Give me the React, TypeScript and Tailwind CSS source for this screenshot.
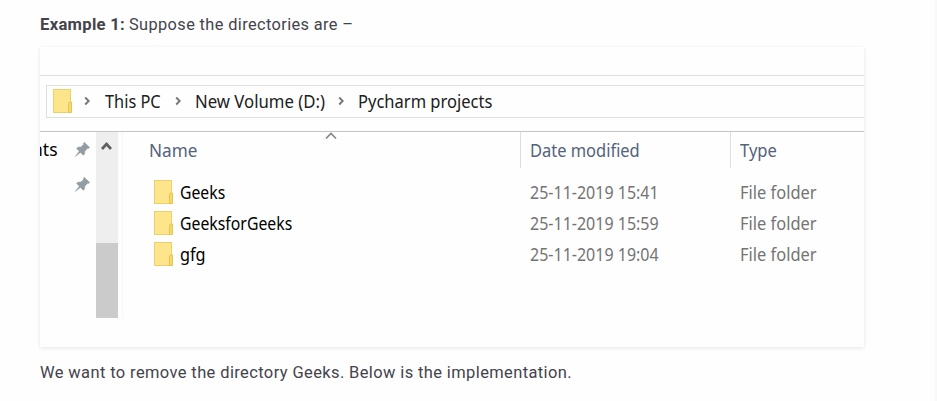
import { useLayoutEffect, useRef, useState } from "react";

type FitProps = { children: string; width: number; className?: string };

// Condenses or widens a single line of text to the given width.
function Fit({ children, width, className = "" }: FitProps) {
  const ref = useRef<HTMLSpanElement>(null);
  const [scale, setScale] = useState(1);
  useLayoutEffect(() => {
    if (ref.current) setScale(width / ref.current.offsetWidth);
  }, [width]);
  return (
    <span className={`block shrink-0 ${className}`} style={{ width }}>
      <span ref={ref} className="inline-block origin-left whitespace-nowrap" style={{ transform: `scaleX(${scale})` }}>
        {children}
      </span>
    </span>
  );
}

function Folder() {
  return (
    <svg width="20" height="24" viewBox="0 0 20 24" className="shrink-0">
      <rect x="0.5" y="0.5" width="17" height="23" fill="#fde58b" stroke="#ecd06b" />
      <path d="M15.500 23.500v-9l1-1.500h2v10.500z" fill="#f8d968" stroke="#e5c04e" strokeWidth="0.9" />
    </svg>
  );
}

function Pin() {
  return (
    <svg width="15" height="15" viewBox="0 0 15 15" className="shrink-0">
      <path d="M9.300 0.300 14.700 5.500 13.200 6.600 12.500 6.300 9.800 9.300 9.500 12.200 8.200 13.200 5.400 10.400 0.300 14.500 4.300 9.200 1.600 6.400 2.700 5.200 5.800 5.100 8.700 2.400 8.300 1.500Z" fill="#929ca3" stroke="#929ca3" strokeWidth="0.5" />
    </svg>
  );
}

function Chevron() {
  return (
    <svg width="7" height="10" viewBox="0 0 7 10" className="shrink-0">
      <path d="M1.200 1.500 4.700 5 1.200 8.500" fill="none" stroke="#777" strokeWidth="1.900" />
    </svg>
  );
}

const rows = [
  { name: "Geeks", nameWidth: 45, date: "25-11-2019 15:41" },
  { name: "GeeksforGeeks", nameWidth: 112, date: "25-11-2019 15:59" },
  { name: "gfg", nameWidth: 26, date: "25-11-2019 19:04" },
];

export default function App() {
  return (
    <div className="flex h-[401px] w-[937px] overflow-hidden bg-white">
      <main className="w-[935px] shrink-0 bg-[#fefefe] pl-10 font-['Roboto',sans-serif] text-[17px] leading-6 text-[#43434c]">
        <p className="flex h-[47px] gap-1 pt-3">
          <Fit width={85} className="font-bold tracking-[0.3px]">Example 1:</Fit>
          <Fit width={224} className="tracking-[0.4px]">Suppose the directories are –</Fit>
        </p>
        <section className="h-[300px] w-[824px] overflow-hidden bg-[#fefefe] font-['Noto_Sans',sans-serif] text-[17.5px] leading-6 text-[#202020] shadow-[0_1px_4px_rgba(0,0,0,0.1)]">
          <div className="h-[29px] border-b border-[#dedede]" />
          <div className="h-[56px] border-b border-[#c4c4c4] pt-[9px] pl-1.5">
            <div className="flex h-[33px] items-center border border-r-0 border-[#dfdfdf] pb-[2px] pl-1.5">
              <Folder />
              <div className="ml-[11px] flex"><Chevron /></div>
              <Fit width={56} className="ml-[14px]">This PC</Fit>
              <div className="ml-[14px] flex"><Chevron /></div>
              <Fit width={130} className="ml-[13px]">New Volume (D:)</Fit>
              <div className="ml-[13px] flex"><Chevron /></div>
              <Fit width={134} className="ml-[13px]">Pycharm projects</Fit>
            </div>
          </div>
          <div className="flex h-[186px]">
            <aside className="w-14 pt-[5px] text-black">
              <div className="flex items-center">
                <div className="flex w-[35px] overflow-hidden">
                  <Fit width={26} className="-ml-[8px]">nts</Fit>
                </div>
                <Pin />
              </div>
              <div className="flex pt-[16px] pl-[35px]"><Pin /></div>
            </aside>
            <div className="flex w-[22px] flex-col justify-between bg-[#eeeeee]">
              <svg width="22" height="24" viewBox="0 0 22 24">
                <path d="M6 17 10.500 12 15 17" fill="none" stroke="#606060" strokeWidth="2.700" />
              </svg>
              <div className="h-[75px] bg-[#cbcbcb]" />
            </div>
            <div className="w-[5px] border-r border-[#f7f7f7]" />
            <div className="flex-1">
              <div className="flex h-[36px] text-[#53627d]">
                <div className="flex w-[397px] pt-[6px] pl-[26px]">
                  <Fit width={48}>Name</Fit>
                  <svg width="14" height="8" viewBox="0 0 14 8" className="-mt-[6px] ml-[127px]">
                    <path d="M2 6.500 7 1.500 12 6.500" fill="none" stroke="#858585" strokeWidth="1.700" />
                  </svg>
                </div>
                <div className="w-[210px] border-l border-[#dedede] pt-[6px] pl-[9px]">
                  <Fit width={110}>Date modified</Fit>
                </div>
                <div className="border-l border-[#dedede] pt-[6px] pl-[9px]">
                  <Fit width={37}>Type</Fit>
                </div>
              </div>
              <div className="pt-[8px]">
                {rows.map((row) => (
                  <div key={row.name} className="flex h-[31px] items-center text-[#747474]">
                    <div className="flex w-[407px] items-center pl-[31px]">
                      <Folder />
                      <Fit width={row.nameWidth} className="ml-[6px] text-black">{row.name}</Fit>
                    </div>
                    <Fit width={129}>{row.date}</Fit>
                    <Fit width={77} className="ml-[81px]">File folder</Fit>
                  </div>
                ))}
              </div>
            </div>
          </div>
        </section>
        <p className="pt-[13px]">
          <Fit width={532} className="tracking-[0.4px]">We want to remove the directory Geeks. Below is the implementation.</Fit>
        </p>
      </main>
      <div className="flex-1 bg-[#f8f8f8]" />
    </div>
  );
}
